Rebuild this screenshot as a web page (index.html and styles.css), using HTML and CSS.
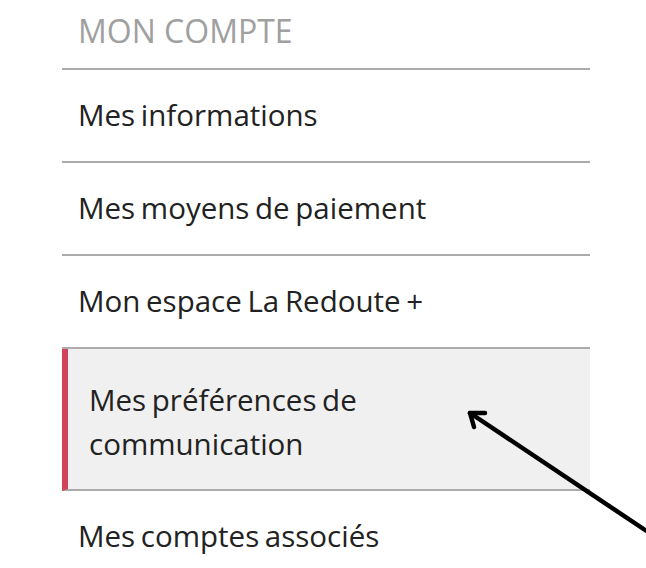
FILE: index.html
```html
<!DOCTYPE html>
<html>
<head>
	<title>Mon compte</title>
	<link rel="stylesheet" href="styles.css">
</head>
<body>
	<nav class="account-menu">
		<div class="menu-title">MON COMPTE</div>
		<ul class="menu-list">
			<li class="menu-item"><a href="#">Mes informations</a></li>
			<li class="menu-item"><a href="#">Mes moyens de paiement</a></li>
			<li class="menu-item"><a href="#">Mon espace La Redoute +</a></li>
			<li class="menu-item active"><a href="#">Mes préférences de<br>communication</a></li>
			<li class="menu-item"><a href="#">Mes comptes associés</a></li>
		</ul>
	</nav>

	<svg class="pointer" width="646" height="568" viewBox="0 0 646 568">
		<path d="M470 413 L660 540" />
		<path d="M485 413 L470 413 L474 427" />
	</svg>
</body>
</html>
```
FILE: styles.css
```css
body {
	margin: 0;
	padding: 0;
	height: 568px;
	overflow: hidden;
	background-color: #ffffff;
	font-family: "Open Sans", Arial, sans-serif;
	color: #222222;
	position: relative;
}

.account-menu {
	margin-left: 62px;
	width: 528px;
}

.menu-title {
	font-size: 32px;
	line-height: 44px;
	color: #a0a0a0;
	padding: 9px 0 15px 16px;
	border-bottom: 2px solid #ababab;
}

.menu-list {
	list-style: none;
	margin: 0;
	padding: 0;
}

.menu-item {
	border-bottom: 2px solid #ababab;
}

.menu-item a {
	display: block;
	font-size: 29.5px;
	line-height: 44px;
	word-spacing: -2px;
	color: #222222;
	text-decoration: none;
	padding: 23px 16px 24px 16px;
}

.menu-item.active {
	background-color: #f0f0f0;
	border-left: 6px solid #d2435b;
}

.menu-item.active a {
	padding: 29px 16px 23px 21px;
}

.pointer {
	position: absolute;
	top: 0;
	left: 0;
	pointer-events: none;
}

.pointer path {
	fill: none;
	stroke: #000000;
	stroke-width: 4.5;
	stroke-linecap: round;
	stroke-linejoin: round;
}
```
